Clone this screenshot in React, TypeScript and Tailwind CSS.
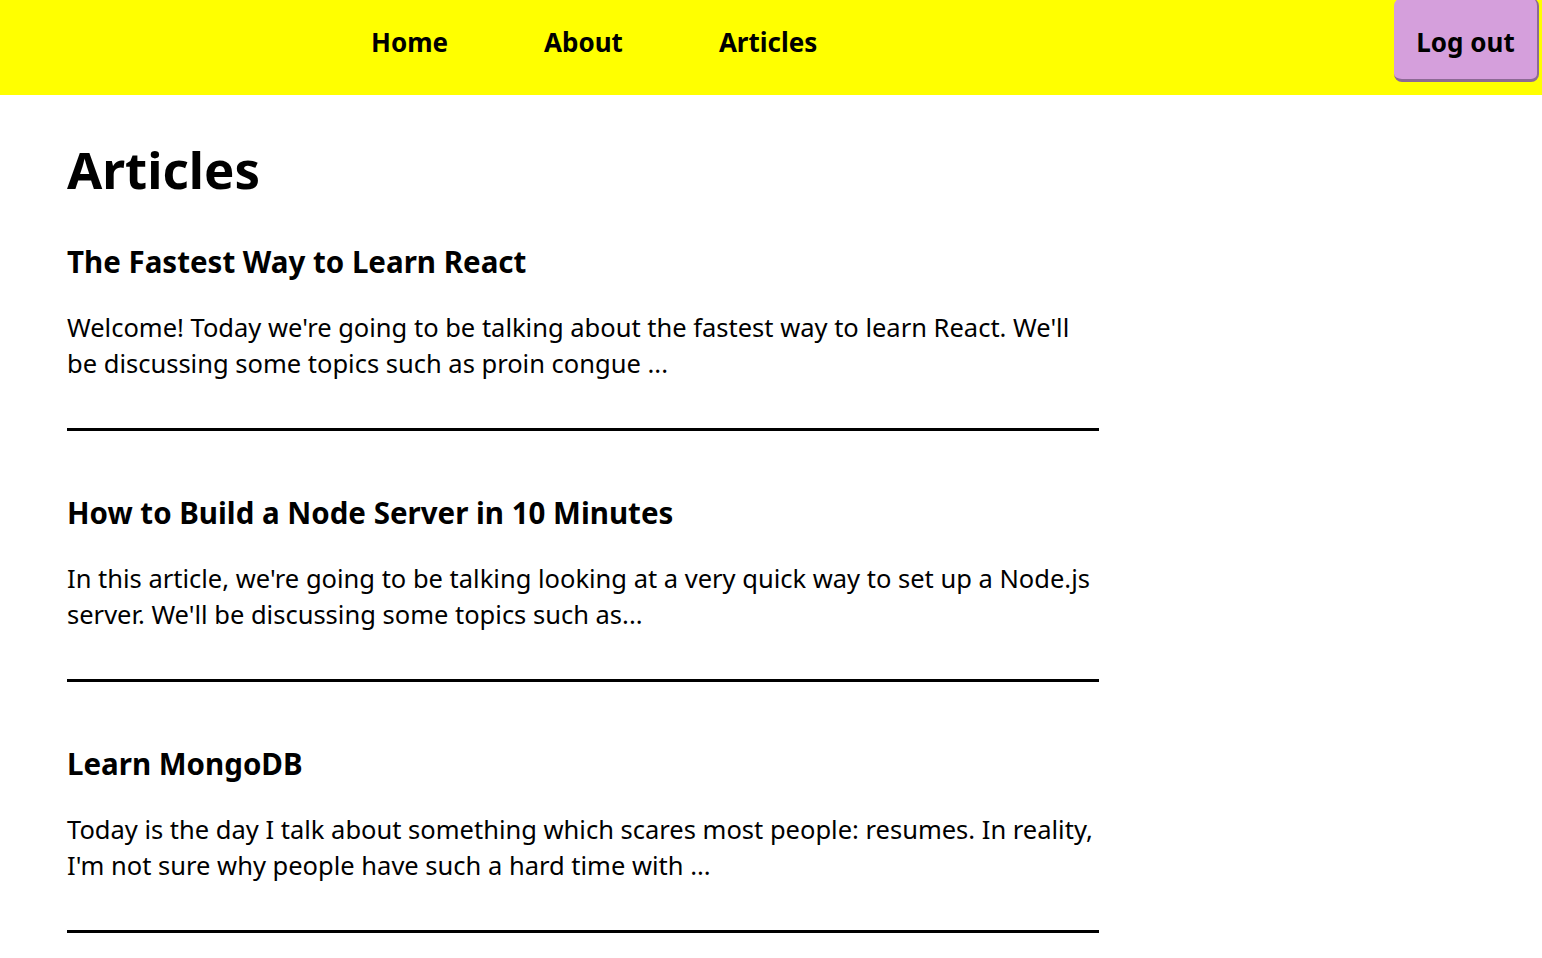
const articles = [
  {
    title: "The Fastest Way to Learn React",
    body: "Welcome! Today we're going to be talking about the fastest way to learn React. We'll be discussing some topics such as proin congue ...",
  },
  {
    title: "How to Build a Node Server in 10 Minutes",
    body: "In this article, we're going to be talking looking at a very quick way to set up a Node.js server. We'll be discussing some topics such as...",
  },
  {
    title: "Learn MongoDB",
    body: "Today is the day I talk about something which scares most people: resumes. In reality, I'm not sure why people have such a hard time with ...",
  },
];

export default function App() {
  return (
    <div className="min-h-screen bg-white text-black font-['Noto_Sans',sans-serif]">
      {/* Navbar */}
      <header className="h-[95px] bg-[#ffff00] flex items-start">
        <nav className="flex items-center h-[85px] pl-[371px] gap-[96px] flex-1">
          <a href="#" className="text-[26px] font-bold">
            Home
          </a>
          <a href="#" className="text-[26px] font-bold">
            About
          </a>
          <a href="#" className="text-[26px] font-bold">
            Articles
          </a>
        </nav>
        <button className="mr-[3px] -mt-[2px] h-[84px] w-[145px] rounded-lg bg-[#d59fdc] border-r-2 border-b-[3px] border-[#8d6a95] text-[26px] font-bold pt-[7px]">
          Log out
        </button>
      </header>

      {/* Articles list */}
      <main className="pl-[67px] w-[1099px]">
        <h1 className="text-[51px] font-bold leading-none pt-[49px]">Articles</h1>
        <div className="mt-[47px]">
          {articles.map((a) => (
            <article key={a.title} className="border-b-[3px] border-black pb-[47px] mb-[62px]">
              <h2 className="text-[29.5px] font-bold leading-[40px]">{a.title}</h2>
              <p className="mt-[27px] text-[25.5px] leading-[36px]">{a.body}</p>
            </article>
          ))}
        </div>
      </main>
    </div>
  );
}
